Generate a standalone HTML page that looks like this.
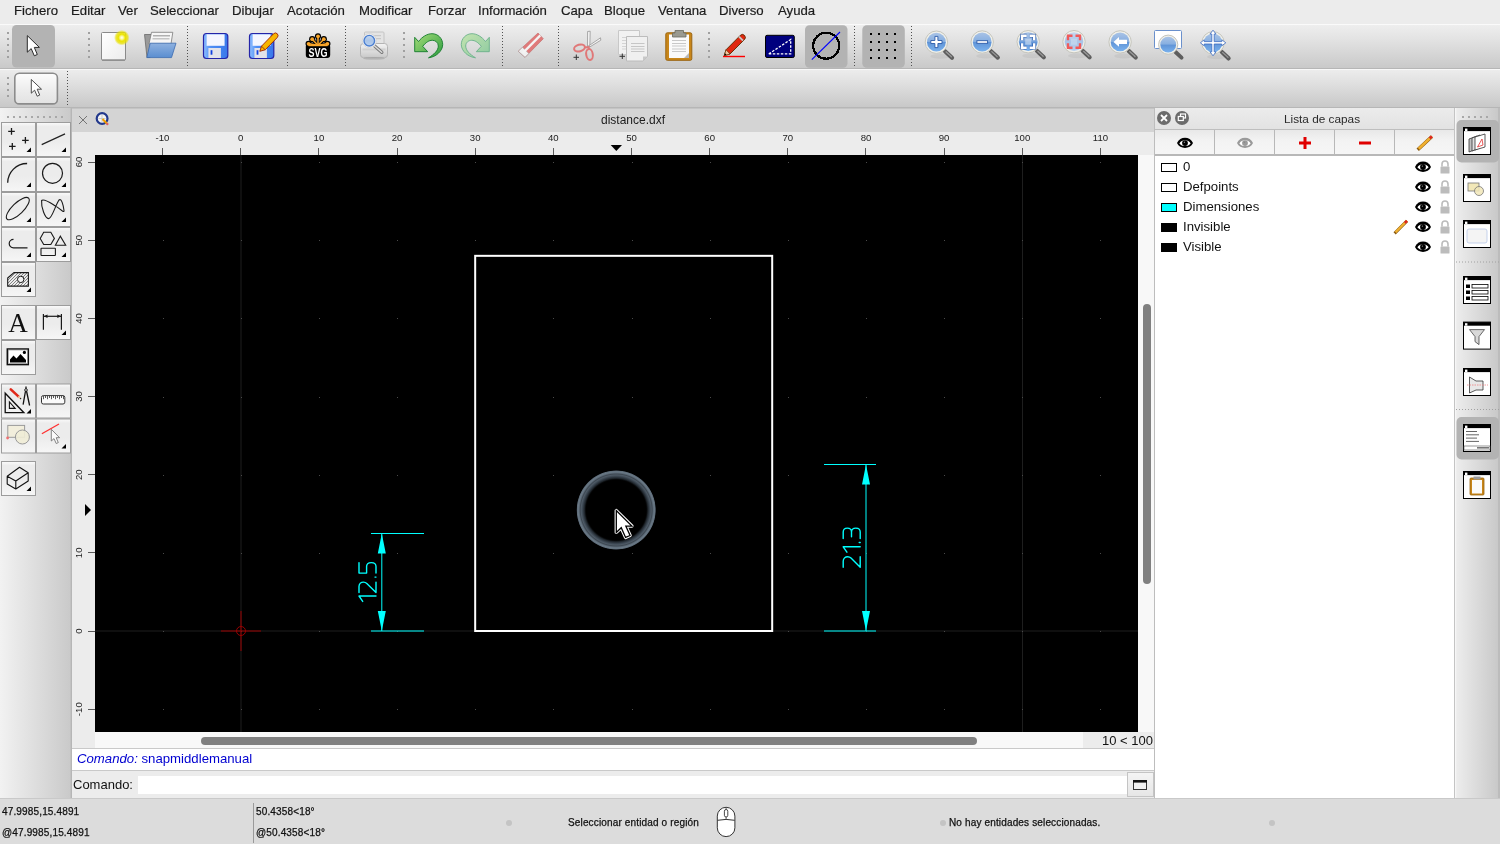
<!DOCTYPE html>
<html><head><meta charset="utf-8">
<style>
*{box-sizing:border-box}
html,body{margin:0;padding:0;width:1500px;height:844px;overflow:hidden;background:#ececec;font-family:"Liberation Sans",sans-serif;position:relative}
.a{position:absolute;will-change:transform}
svg{overflow:visible}
#menubar{left:0;top:0;width:1500px;height:24px;background:#ececec}
#menubar span{will-change:transform;-webkit-text-stroke:0.2px #1c1c1c;position:absolute;top:3px;font-size:13.2px;color:#1c1c1c}
#tb1{left:0;top:24px;width:1500px;height:45px;background:linear-gradient(#eeeeee,#e2e2e2 35%,#c9c9c9);border-top:1px solid #fafafa;border-bottom:1px solid #b6b6b6}
#tb2{left:0;top:69px;width:1500px;height:39px;background:linear-gradient(#ececec,#e0e0e0 35%,#c8c8c8);border-top:1px solid #f8f8f8;border-bottom:1px solid #b6b6b6}
#ldock{left:0;top:108px;width:72px;height:690px;background:linear-gradient(90deg,#f2f2f2,#cacaca 97%,#b0b0b0)}
#doc{left:72px;top:108px;width:1083px;height:690px;background:#ececec}
#doctitle{left:72px;top:108px;width:1082px;height:24px;background:#d4d4d4;border-top:1px solid #c4c4c4}
#ruler{left:72px;top:132px;width:1082px;height:23px;background:#ececec}
#canvas{left:95px;top:155px;width:1043px;height:577px;background:#000}
#vscroll{left:1138px;top:155px;width:16px;height:577px;background:#f8f8f8}
#vthumb{left:1143px;top:303.5px;width:8px;height:279.5px;background:#808080;border-radius:4px}
#hscroll{left:95px;top:732px;width:988px;height:16px;background:#f8f8f8}
#hthumb{left:201px;top:737px;width:776px;height:8px;background:#808080;border-radius:4px}
#zoomlbl{left:1083px;top:732px;width:71px;height:16px;background:#ececec;font-size:13px;color:#111;text-align:right;padding-right:1px;line-height:18px}
#hist{left:72px;top:748px;width:1082px;height:23px;border-top-width:2px;background:#fff;border-top:1px solid #c9c9c9;border-bottom:1px solid #c9c9c9}
#cmdrow{left:72px;top:771px;width:1082px;height:27px;background:#ececec}
#cmdin{left:138px;top:776px;width:989px;height:18px;background:#fff}
#cmdbtn{left:1127px;top:772px;width:27px;height:25px;background:linear-gradient(#f4f4f4,#e6e6e6);border:1px solid #c4c4c4}
#docborder{left:1154px;top:108px;width:2px;height:690px;background:#bdbdbd}
#rdock{left:1155px;top:108px;width:300px;height:690px;background:#fff}
#tdock{left:1455px;top:108px;width:45px;height:690px;background:linear-gradient(90deg,#fafafa,#ececec 4%,#c9c9c9 95%,#bcbcbc 95.5%,#bcbcbc)}
#status{left:0;top:798px;width:1500px;height:46px;background:#dcdcdc;border-top:1px solid #c9c9c9}
.st{position:absolute;font-size:10px;letter-spacing:0.15px;color:#111;white-space:nowrap;-webkit-text-stroke:0.25px #111}
</style></head><body>
<div id="menubar" class="a">
<span style="left:14px">Fichero</span>
<span style="left:71px">Editar</span>
<span style="left:118px">Ver</span>
<span style="left:150px">Seleccionar</span>
<span style="left:232px">Dibujar</span>
<span style="left:287px">Acotación</span>
<span style="left:359px">Modificar</span>
<span style="left:428px">Forzar</span>
<span style="left:478px">Información</span>
<span style="left:561px">Capa</span>
<span style="left:604px">Bloque</span>
<span style="left:658px">Ventana</span>
<span style="left:719px">Diverso</span>
<span style="left:778px">Ayuda</span>
</div>
<div id="tb1" class="a"></div>
<div id="tb2" class="a"></div>
<svg class="a" style="left:0;top:0" width="1500" height="70" viewBox="0 0 1500 70"><defs>
<linearGradient id="gBlueLens" x1="0" y1="0" x2="0" y2="1"><stop offset="0" stop-color="#a9c3e6"/><stop offset="0.48" stop-color="#86aee0"/><stop offset="0.5" stop-color="#5f93d6"/><stop offset="1" stop-color="#7ab2ee"/></linearGradient>
<linearGradient id="gBlueLensL" x1="0" y1="0" x2="0" y2="1"><stop offset="0" stop-color="#c6d8ef"/><stop offset="0.5" stop-color="#a9c4e8"/><stop offset="1" stop-color="#b6d0f0"/></linearGradient>
<linearGradient id="gFloppy" x1="0" y1="0" x2="1" y2="0"><stop offset="0" stop-color="#8fc0ff"/><stop offset="0.3" stop-color="#4e8ef5"/><stop offset="1" stop-color="#3a78ea"/></linearGradient>
<linearGradient id="gFolder" x1="0" y1="0" x2="0" y2="1"><stop offset="0" stop-color="#8fb2e0"/><stop offset="1" stop-color="#5a8ed0"/></linearGradient>
<linearGradient id="gUndo" x1="0" y1="0" x2="1" y2="1"><stop offset="0" stop-color="#a6dc7a"/><stop offset="1" stop-color="#2a9c3e"/></linearGradient>
<linearGradient id="gRedo" x1="1" y1="0" x2="0" y2="1"><stop offset="0" stop-color="#c4e4b0"/><stop offset="1" stop-color="#8ccaa0"/></linearGradient>
<radialGradient id="gGlow"><stop offset="0" stop-color="#ffffff"/><stop offset="0.2" stop-color="#fbf8a0"/><stop offset="0.45" stop-color="#ece400"/><stop offset="0.75" stop-color="#e8e000" stop-opacity="0.75"/><stop offset="1" stop-color="#e8e000" stop-opacity="0"/></radialGradient>
<linearGradient id="gPage" x1="0" y1="0" x2="1" y2="1"><stop offset="0" stop-color="#ffffff"/><stop offset="1" stop-color="#ececec"/></linearGradient>
<linearGradient id="gPrinter" x1="0" y1="0" x2="0" y2="1"><stop offset="0" stop-color="#f4f4f4"/><stop offset="1" stop-color="#c8c8c8"/></linearGradient>
</defs><rect x="7" y="32" width="2" height="2" fill="#a0a0a0"/><rect x="7" y="38" width="2" height="2" fill="#a0a0a0"/><rect x="7" y="44" width="2" height="2" fill="#a0a0a0"/><rect x="7" y="50" width="2" height="2" fill="#a0a0a0"/><rect x="7" y="56" width="2" height="2" fill="#a0a0a0"/><rect x="12" y="25" width="43" height="42.5" rx="4.5" fill="#b3b3b3"/><path d="M27.3,35.6 L27.3,52.2 L31.2,48.6 L34.3,55.8 L37.3,54.5 L34.3,47.4 L39.4,47.4 Z" fill="#fff" stroke="#2a2a2a" stroke-width="1" stroke-linejoin="round"/><rect x="88" y="32" width="2" height="2" fill="#a0a0a0"/><rect x="88" y="38" width="2" height="2" fill="#a0a0a0"/><rect x="88" y="44" width="2" height="2" fill="#a0a0a0"/><rect x="88" y="50" width="2" height="2" fill="#a0a0a0"/><rect x="88" y="56" width="2" height="2" fill="#a0a0a0"/><rect x="101.5" y="32.5" width="24" height="27.5" rx="1" fill="url(#gPage)" stroke="#8a8a8a" stroke-width="1"/><line x1="102" y1="60.2" x2="125" y2="60.2" stroke="#8a8a8a" stroke-width="1.2"/><circle cx="121.8" cy="37.7" r="7.8" fill="url(#gGlow)"/><path d="M144.5,34.5 L152,34.5 L150,57.5 L147,57.5 Z" fill="#9a9a9a" stroke="#6a6a6a" stroke-width="0.8"/><path d="M151.5,32.3 L172.8,32.3 L171,44 L149,44 Z" fill="#f6f6f6" stroke="#7a7a7a" stroke-width="0.8"/><rect x="153" y="35" width="17" height="1.5" fill="#b0b0b0"/><rect x="152.5" y="38" width="17" height="1.5" fill="#c4c4c4"/><path d="M150.2,43.2 L176,43.2 L171.5,57.6 L146.8,57.6 Z" fill="url(#gFolder)" stroke="#3a6ab0" stroke-width="0.8"/><line x1="187.5" y1="26" x2="187.5" y2="67" stroke="#505050" stroke-width="1" stroke-dasharray="1 2"/><rect x="203.5" y="33.5" width="24.3" height="25" rx="3" fill="url(#gFloppy)" stroke="#2424a8" stroke-width="1.2"/><rect x="206.6" y="34.3" width="18" height="11.5" fill="#f4f6ff"/><rect x="208.4" y="48" width="12.5" height="10" fill="#e2e2ea"/><rect x="210.6" y="50.2" width="1.8" height="4.5" fill="#1040e0"/><rect x="249.5" y="33.5" width="24.3" height="25" rx="3" fill="url(#gFloppy)" stroke="#2424a8" stroke-width="1.2"/><rect x="252.6" y="34.3" width="18" height="11.5" fill="#f4f6ff"/><rect x="254.4" y="48" width="12.5" height="10" fill="#e2e2ea"/><rect x="256.6" y="50.2" width="1.8" height="4.5" fill="#1040e0"/><path d="M259.8,51.3 L261.5,46.2 L273.5,33.8 Q275.5,32 277.3,33.8 Q279,35.8 277.2,37.6 L265.2,49.8 Z" fill="#f7b500" stroke="#a02000" stroke-width="0.9"/><path d="M261.5,46.2 L265.2,49.8" stroke="#a02000" stroke-width="0.8"/><line x1="287.5" y1="26" x2="287.5" y2="67" stroke="#505050" stroke-width="1" stroke-dasharray="1 2"/><g stroke="#000" stroke-width="3.6" stroke-linecap="round"><line x1="318" y1="46" x2="318" y2="36.3"/><line x1="318" y1="46" x2="312.2" y2="39.2"/><line x1="318" y1="46" x2="323.8" y2="39.2"/><line x1="318" y1="46" x2="308.6" y2="43.8"/><line x1="318" y1="46" x2="327.4" y2="43.8"/></g><g fill="#000"><circle cx="318" cy="36.3" r="3.1"/><circle cx="312.2" cy="39.2" r="3.1"/><circle cx="323.8" cy="39.2" r="3.1"/><circle cx="308.6" cy="43.8" r="3.1"/><circle cx="327.4" cy="43.8" r="3.1"/></g><rect x="305.8" y="43.6" width="24.4" height="14.4" rx="3.2" fill="#000"/><g stroke="#f9a62a" stroke-width="1.5" stroke-linecap="round"><line x1="318" y1="45.3" x2="318" y2="36.3"/><line x1="318" y1="45.3" x2="312.2" y2="39.2"/><line x1="318" y1="45.3" x2="323.8" y2="39.2"/><line x1="318" y1="45.3" x2="308.6" y2="43.8"/><line x1="318" y1="45.3" x2="327.4" y2="43.8"/></g><g fill="#f9a62a"><circle cx="318" cy="36.3" r="1.9"/><circle cx="312.2" cy="39.2" r="1.9"/><circle cx="323.8" cy="39.2" r="1.9"/><circle cx="308.6" cy="43.8" r="1.9"/><circle cx="327.4" cy="43.8" r="1.9"/></g><rect x="308.5" y="44.6" width="19" height="1.6" fill="#f9a62a"/><text x="318" y="56.6" text-anchor="middle" font-family="Liberation Sans" font-weight="bold" font-size="13.5" fill="#fff" textLength="19" lengthAdjust="spacingAndGlyphs">SVG</text><line x1="345.5" y1="26" x2="345.5" y2="67" stroke="#505050" stroke-width="1" stroke-dasharray="1 2"/><rect x="364.5" y="32" width="19.5" height="14" rx="1" fill="#e4e4e4" stroke="#c4c4c4" stroke-width="1"/><rect x="367" y="35" width="14" height="1.2" fill="#c8c8c8"/><rect x="367" y="38" width="14" height="1.2" fill="#c8c8c8"/><rect x="360.5" y="43.5" width="27" height="14.2" rx="3" fill="url(#gPrinter)" stroke="#b4b4b4" stroke-width="1"/><rect x="362.5" y="48.5" width="23" height="2" fill="#d0d0d0"/><ellipse cx="374" cy="58.5" rx="11" ry="1.3" fill="#000" opacity="0.12"/><line x1="373.5" y1="45" x2="381.8" y2="52.3" stroke="#7a7a7a" stroke-width="3.4" stroke-linecap="round"/><line x1="373.5" y1="45" x2="381.8" y2="52.3" stroke="#dcdcdc" stroke-width="1.4" stroke-linecap="round"/><circle cx="369.3" cy="40.7" r="7" fill="#f8f8f8" stroke="#d0d0d0" stroke-width="0.8"/><circle cx="369.3" cy="40.7" r="5.3" fill="url(#gBlueLensL)" stroke="#4a7ed0" stroke-width="1.4"/><rect x="403" y="32" width="2" height="2" fill="#a0a0a0"/><rect x="403" y="38" width="2" height="2" fill="#a0a0a0"/><rect x="403" y="44" width="2" height="2" fill="#a0a0a0"/><rect x="403" y="50" width="2" height="2" fill="#a0a0a0"/><rect x="403" y="56" width="2" height="2" fill="#a0a0a0"/><path d="M414.7,37.3 L418.5,41.5 C422,37 427,33.7 432,33.7 C438,33.7 442.7,38.5 442.7,44.5 C442.7,51 436,57 428.5,57.8 C434,54.5 438.3,50.5 438.3,46 C438.3,42.5 435.5,40.3 432.3,40.3 C429,40.3 426,42.3 422.7,46.3 L427.7,51.7 L414.7,51.7 Z" fill="url(#gUndo)" stroke="#137a2a" stroke-width="0.9" stroke-linejoin="round"/><path transform="translate(904,0) scale(-1,1)" d="M414.7,37.3 L418.5,41.5 C422,37 427,33.7 432,33.7 C438,33.7 442.7,38.5 442.7,44.5 C442.7,51 436,57 428.5,57.8 C434,54.5 438.3,50.5 438.3,46 C438.3,42.5 435.5,40.3 432.3,40.3 C429,40.3 426,42.3 422.7,46.3 L427.7,51.7 L414.7,51.7 Z" fill="url(#gRedo)" stroke="#6ab08a" stroke-width="0.9" stroke-linejoin="round"/><line x1="502.5" y1="26" x2="502.5" y2="67" stroke="#505050" stroke-width="1" stroke-dasharray="1 2"/><ellipse cx="530" cy="57" rx="10" ry="1.6" fill="#d4d4d4"/><path d="M538,33 L543.3,38.7 L525,57.3 L518.3,51.3 Z" fill="#e07a7a" stroke="#c06868" stroke-width="0.6"/><path d="M522.5,47.2 L528.8,53.6 L525,57.3 L518.3,51.3 Z" fill="#f0f0f0" stroke="#a0a0a0" stroke-width="0.6"/><path d="M539.5,34.6 L541.1,36.3 L524,53.5 L522.4,51.8 Z" fill="#f4f4f4"/><line x1="558.5" y1="26" x2="558.5" y2="67" stroke="#505050" stroke-width="1" stroke-dasharray="1 2"/><path d="M587.5,46.5 L587.6,31.5 L590.2,31.2 L589.8,46 Z" fill="#f4f4f4" stroke="#8a8a8a" stroke-width="0.7"/><path d="M588.5,46 L600.5,37.8 L600.8,40.2 L590,46.8 Z" fill="#f4f4f4" stroke="#8a8a8a" stroke-width="0.7"/><ellipse cx="579.5" cy="48" rx="5.5" ry="3.3" transform="rotate(-15 579.5 48)" fill="none" stroke="#e07878" stroke-width="2"/><ellipse cx="589.5" cy="54.5" rx="3.3" ry="5.5" transform="rotate(-8 589.5 54.5)" fill="none" stroke="#e07878" stroke-width="2"/><path d="M584.5,47.5 L588.5,47 L589.5,49.5" fill="none" stroke="#e07878" stroke-width="2"/><path d="M573.5,57.3 L579,57.3 M576.3,54.5 L576.3,60" stroke="#333" stroke-width="1"/><path d="M618.5,30.5 L639.5,30.5 L639.5,54.5 L618.5,54.5 Z" fill="#f2f2f2" stroke="#c8c8c8" stroke-width="1"/><rect x="622" y="37" width="10" height="1" fill="#d4d4d4"/><rect x="622" y="40" width="10" height="1" fill="#d4d4d4"/><rect x="622" y="43" width="10" height="1" fill="#d4d4d4"/><rect x="622" y="46" width="10" height="1" fill="#d4d4d4"/><rect x="622" y="48.5" width="10" height="1" fill="#d4d4d4"/><path d="M626.5,36.5 L647.5,36.5 L647.5,56.5 L643,61 L626.5,61 Z" fill="#f0f0f0" stroke="#bcbcbc" stroke-width="1"/><path d="M643,61 L643,56.5 L647.5,56.5 Z" fill="#c8c8c8"/><rect x="631" y="43" width="13.5" height="1" fill="#c6c6c6"/><rect x="631" y="46" width="13.5" height="1" fill="#c6c6c6"/><rect x="631" y="48.5" width="13.5" height="1" fill="#c6c6c6"/><rect x="631" y="51" width="13.5" height="1" fill="#c6c6c6"/><path d="M619.5,56.3 L625,56.3 M622.3,53.5 L622.3,59" stroke="#333" stroke-width="1"/><rect x="665.8" y="32.8" width="26" height="27.5" rx="1.5" fill="#c8861a" stroke="#9a6410" stroke-width="1"/><rect x="669" y="34.5" width="20" height="23.5" fill="#fafafa"/><path d="M684,58 L689,58 L689,53 Z" fill="#b8b8b8"/><rect x="672" y="40" width="14" height="1" fill="#c8c8c8"/><rect x="672" y="43" width="14" height="1" fill="#c8c8c8"/><rect x="672" y="45.5" width="14" height="1" fill="#c8c8c8"/><rect x="672" y="48.5" width="14" height="1" fill="#c8c8c8"/><rect x="672" y="51" width="14" height="1" fill="#c8c8c8"/><path d="M672.5,37 L672.5,33 L675,33 L675,30.5 L683.5,30.5 L683.5,33 L686,33 L686,37 Z" fill="#9a9a90" stroke="#6a6a60" stroke-width="0.8"/><rect x="708" y="32" width="2" height="2" fill="#a0a0a0"/><rect x="708" y="38" width="2" height="2" fill="#a0a0a0"/><rect x="708" y="44" width="2" height="2" fill="#a0a0a0"/><rect x="708" y="50" width="2" height="2" fill="#a0a0a0"/><rect x="708" y="56" width="2" height="2" fill="#a0a0a0"/><line x1="723" y1="56.5" x2="745" y2="56.5" stroke="#ff0000" stroke-width="1.4"/><path d="M724.3,55.5 L726,49.8 L740.5,35.2 Q742.6,33.4 744.6,35.5 Q746.3,37.5 744.5,39.5 L730,54 Z" fill="#e02810" stroke="#5a2a00" stroke-width="0.9"/><path d="M726,49.8 L730,54 L724.3,55.5 Z" fill="#f2c8a0" stroke="#5a2a00" stroke-width="0.6"/><path d="M724.3,55.5 L725,53.3 L726.5,54.8 Z" fill="#000"/><path d="M739,36.7 L743,40.7" stroke="#c8c8c8" stroke-width="1.8"/><rect x="765.5" y="35.3" width="28.8" height="22.2" rx="1.5" fill="#00007e" stroke="#000" stroke-width="1"/><path d="M768.8,53.9 L790.7,39.5 L790.7,53.9 Z" fill="none" stroke="#fff" stroke-width="1.3" stroke-dasharray="2.5 1.5"/><rect x="805" y="25.3" width="42.5" height="42.5" rx="4.5" fill="#b3b3b3"/><circle cx="826.2" cy="45.7" r="13" fill="none" stroke="#000" stroke-width="2.3" shape-rendering="crispEdges"/><line x1="811.8" y1="59.6" x2="840" y2="32" stroke="#0000ff" stroke-width="1.1"/><line x1="854.5" y1="26" x2="854.5" y2="67" stroke="#505050" stroke-width="1" stroke-dasharray="1 2"/><rect x="862.3" y="25.3" width="42.5" height="42.5" rx="4.5" fill="#b3b3b3"/><rect x="870" y="33" width="2" height="2" fill="#000"/><rect x="870" y="41" width="2" height="2" fill="#000"/><rect x="870" y="49" width="2" height="2" fill="#000"/><rect x="870" y="57" width="2" height="2" fill="#000"/><rect x="878" y="33" width="2" height="2" fill="#000"/><rect x="878" y="41" width="2" height="2" fill="#000"/><rect x="878" y="49" width="2" height="2" fill="#000"/><rect x="878" y="57" width="2" height="2" fill="#000"/><rect x="886" y="33" width="2" height="2" fill="#000"/><rect x="886" y="41" width="2" height="2" fill="#000"/><rect x="886" y="49" width="2" height="2" fill="#000"/><rect x="886" y="57" width="2" height="2" fill="#000"/><rect x="894" y="33" width="2" height="2" fill="#000"/><rect x="894" y="41" width="2" height="2" fill="#000"/><rect x="894" y="49" width="2" height="2" fill="#000"/><rect x="894" y="57" width="2" height="2" fill="#000"/><line x1="911.5" y1="26" x2="911.5" y2="67" stroke="#505050" stroke-width="1" stroke-dasharray="1 2"/><line x1="945.0" y1="51.2" x2="952.0" y2="57.800000000000004" stroke="#5e5e5e" stroke-width="4.2" stroke-linecap="round"/><line x1="946.0" y1="51.800000000000004" x2="951.4" y2="56.800000000000004" stroke="#9a9a9a" stroke-width="1.2" stroke-linecap="round"/><ellipse cx="940.4" cy="56.2" rx="10" ry="2.5" fill="#000" opacity="0.05"/><circle cx="936.4" cy="42.2" r="11.2" fill="#f0f0ea" stroke="#c4c4bc" stroke-width="1"/><circle cx="936.4" cy="42.2" r="9.4" fill="url(#gBlueLens)"/><path d="M934.9,36.4 L937.9,36.4 L937.9,40.5 L942.0,40.5 L942.0,43.5 L937.9,43.5 L937.9,47.6 L934.9,47.6 L934.9,43.5 L930.8,43.5 L930.8,40.5 L934.9,40.5 Z" fill="#fff" stroke="#2a5aa8" stroke-width="0.9"/><line x1="990.8000000000001" y1="51" x2="997.8000000000001" y2="57.6" stroke="#5e5e5e" stroke-width="4.2" stroke-linecap="round"/><line x1="991.8000000000001" y1="51.6" x2="997.2" y2="56.6" stroke="#9a9a9a" stroke-width="1.2" stroke-linecap="round"/><ellipse cx="986.2" cy="56" rx="10" ry="2.5" fill="#000" opacity="0.05"/><circle cx="982.2" cy="42" r="11.2" fill="#f0f0ea" stroke="#c4c4bc" stroke-width="1"/><circle cx="982.2" cy="42" r="9.4" fill="url(#gBlueLens)"/><rect x="976.9" y="40.7" width="10.7" height="2.6" fill="#fff" stroke="#2a5aa8" stroke-width="0.9"/><line x1="1036.8" y1="50.7" x2="1043.8" y2="57.300000000000004" stroke="#5e5e5e" stroke-width="4.2" stroke-linecap="round"/><line x1="1037.8" y1="51.300000000000004" x2="1043.2" y2="56.300000000000004" stroke="#9a9a9a" stroke-width="1.2" stroke-linecap="round"/><ellipse cx="1032.2" cy="55.7" rx="10" ry="2.5" fill="#000" opacity="0.05"/><circle cx="1028.2" cy="41.7" r="11.2" fill="#f0f0ea" stroke="#c4c4bc" stroke-width="1"/><circle cx="1028.2" cy="41.7" r="9.4" fill="url(#gBlueLens)"/><rect x="1025.2" y="38.7" width="6" height="6" fill="#c8daf0" opacity="0.7"/><path d="M1022.2,40.2 L1022.2,35.7 L1026.7,35.7 M1029.7,35.7 L1034.2,35.7 L1034.2,40.2 M1034.2,43.2 L1034.2,47.7 L1029.7,47.7 M1026.7,47.7 L1022.2,47.7 L1022.2,43.2" fill="none" stroke="#2a5aa8" stroke-width="3.8" opacity="0.9"/><path d="M1022.2,40.2 L1022.2,35.7 L1026.7,35.7 M1029.7,35.7 L1034.2,35.7 L1034.2,40.2 M1034.2,43.2 L1034.2,47.7 L1029.7,47.7 M1026.7,47.7 L1022.2,47.7 L1022.2,43.2" fill="none" stroke="#fff" stroke-width="2.4"/><line x1="1082.6" y1="50.7" x2="1089.6" y2="57.300000000000004" stroke="#5e5e5e" stroke-width="4.2" stroke-linecap="round"/><line x1="1083.6" y1="51.300000000000004" x2="1089" y2="56.300000000000004" stroke="#9a9a9a" stroke-width="1.2" stroke-linecap="round"/><ellipse cx="1078" cy="55.7" rx="10" ry="2.5" fill="#000" opacity="0.05"/><circle cx="1074" cy="41.7" r="11.2" fill="#f0f0ea" stroke="#c4c4bc" stroke-width="1"/><circle cx="1074" cy="41.7" r="9.4" fill="url(#gBlueLensL)"/><rect x="1071" y="38.7" width="6" height="6" fill="#c8daf0" opacity="0.7"/><path d="M1068,40.2 L1068,35.7 L1072.5,35.7 M1075.5,35.7 L1080,35.7 L1080,40.2 M1080,43.2 L1080,47.7 L1075.5,47.7 M1072.5,47.7 L1068,47.7 L1068,43.2" fill="none" stroke="#2a5aa8" stroke-width="3.8" opacity="0"/><path d="M1068,40.2 L1068,35.7 L1072.5,35.7 M1075.5,35.7 L1080,35.7 L1080,40.2 M1080,43.2 L1080,47.7 L1075.5,47.7 M1072.5,47.7 L1068,47.7 L1068,43.2" fill="none" stroke="#f05a5a" stroke-width="2.4"/><line x1="1128.6999999999998" y1="50.9" x2="1135.6999999999998" y2="57.5" stroke="#5e5e5e" stroke-width="4.2" stroke-linecap="round"/><line x1="1129.6999999999998" y1="51.5" x2="1135.1" y2="56.5" stroke="#9a9a9a" stroke-width="1.2" stroke-linecap="round"/><ellipse cx="1124.1" cy="55.9" rx="10" ry="2.5" fill="#000" opacity="0.05"/><circle cx="1120.1" cy="41.9" r="11.2" fill="#f0f0ea" stroke="#c4c4bc" stroke-width="1"/><circle cx="1120.1" cy="41.9" r="9.4" fill="url(#gBlueLens)"/><path d="M1113.5,41.9 L1119,37 L1119,39.7 L1127,39.7 L1127,44.1 L1119,44.1 L1119,46.8 Z" fill="#fff"/><rect x="1154.5" y="30.5" width="27" height="18" rx="1" fill="#fff" stroke="#6a90cc" stroke-width="1"/><line x1="1175.5" y1="52" x2="1181.5" y2="57.6" stroke="#5e5e5e" stroke-width="4" stroke-linecap="round"/><circle cx="1168.2" cy="44.7" r="9.6" fill="#f0f0ea" stroke="#c4c4bc" stroke-width="1"/><circle cx="1168.2" cy="44.7" r="7.9" fill="url(#gBlueLens)"/><line x1="1221.6" y1="51.8" x2="1228.6" y2="58.4" stroke="#5e5e5e" stroke-width="4.2" stroke-linecap="round"/><line x1="1222.6" y1="52.4" x2="1228" y2="57.4" stroke="#9a9a9a" stroke-width="1.2" stroke-linecap="round"/><ellipse cx="1217" cy="56.8" rx="10" ry="2.5" fill="#000" opacity="0.05"/><circle cx="1213" cy="42.8" r="11.2" fill="#f0f0ea" stroke="#c4c4bc" stroke-width="1"/><circle cx="1213" cy="42.8" r="9.4" fill="url(#gBlueLens)"/><g fill="#fff" stroke="#3a6ac0" stroke-width="0.8"><path d="M1213,30.2 L1216,34 L1214.2,34 L1214.2,41.6 L1221.8,41.6 L1221.8,39.8 L1225.8,42.8 L1221.8,45.8 L1221.8,44 L1214.2,44 L1214.2,51.8 L1216,51.8 L1213,55.8 L1210,51.8 L1211.8,51.8 L1211.8,44 L1204.2,44 L1204.2,45.8 L1200.4,42.8 L1204.2,39.8 L1204.2,41.6 L1211.8,41.6 L1211.8,34 L1210,34 Z"/></g></svg>
<svg class="a" style="left:0;top:0" width="1500" height="110" viewBox="0 0 1500 110"><rect x="7" y="77" width="2" height="2" fill="#a0a0a0"/><rect x="7" y="83" width="2" height="2" fill="#a0a0a0"/><rect x="7" y="89" width="2" height="2" fill="#a0a0a0"/><rect x="7" y="95" width="2" height="2" fill="#a0a0a0"/><defs><linearGradient id="gBtn2" x1="0" y1="0" x2="0" y2="1"><stop offset="0" stop-color="#fdfdfd"/><stop offset="0.5" stop-color="#eeeeee"/><stop offset="1" stop-color="#e2e2e2"/></linearGradient></defs><rect x="14.8" y="73.3" width="42.6" height="30.6" rx="4.5" fill="url(#gBtn2)" stroke="#8c8c8c" stroke-width="1.6"/><path d="M31.3,79.5 L31.3,93.2 L34.6,90.2 L37.2,96.2 L39.7,95.1 L37.2,89.2 L41.5,89.2 Z" fill="#fff" stroke="#3a3a3a" stroke-width="0.9" stroke-linejoin="round"/><line x1="67.5" y1="71" x2="67.5" y2="105" stroke="#505050" stroke-width="1" stroke-dasharray="1 2"/></svg>
<div id="ldock" class="a"></div>
<svg class="a" style="left:0;top:0" width="72" height="844" viewBox="0 0 72 844"><defs><linearGradient id="gTool" x1="0" y1="0" x2="0" y2="1"><stop offset="0" stop-color="#fbfbfb"/><stop offset="0.12" stop-color="#ececec"/><stop offset="0.55" stop-color="#ececec"/><stop offset="1" stop-color="#f6f6f6"/></linearGradient></defs><rect x="7" y="116" width="2" height="2" fill="#a8a8a8"/><rect x="13" y="116" width="2" height="2" fill="#a8a8a8"/><rect x="19" y="116" width="2" height="2" fill="#a8a8a8"/><rect x="25" y="116" width="2" height="2" fill="#a8a8a8"/><rect x="31" y="116" width="2" height="2" fill="#a8a8a8"/><rect x="37" y="116" width="2" height="2" fill="#a8a8a8"/><rect x="43" y="116" width="2" height="2" fill="#a8a8a8"/><rect x="49" y="116" width="2" height="2" fill="#a8a8a8"/><rect x="55" y="116" width="2" height="2" fill="#a8a8a8"/><rect x="61" y="116" width="2" height="2" fill="#a8a8a8"/><rect x="1.5" y="122.5" width="34" height="34" fill="url(#gTool)" stroke="#9c9c9c" stroke-width="1"/><path d="M26.5,152 L31,152 L31,147.5 Z" fill="#000"/><rect x="36.5" y="122.5" width="34" height="34" fill="url(#gTool)" stroke="#9c9c9c" stroke-width="1"/><path d="M61.5,152 L66,152 L66,147.5 Z" fill="#000"/><rect x="1.5" y="157.5" width="34" height="34" fill="url(#gTool)" stroke="#9c9c9c" stroke-width="1"/><path d="M26.5,187 L31,187 L31,182.5 Z" fill="#000"/><rect x="36.5" y="157.5" width="34" height="34" fill="url(#gTool)" stroke="#9c9c9c" stroke-width="1"/><path d="M61.5,187 L66,187 L66,182.5 Z" fill="#000"/><rect x="1.5" y="192.5" width="34" height="34" fill="url(#gTool)" stroke="#9c9c9c" stroke-width="1"/><path d="M26.5,222 L31,222 L31,217.5 Z" fill="#000"/><rect x="36.5" y="192.5" width="34" height="34" fill="url(#gTool)" stroke="#9c9c9c" stroke-width="1"/><path d="M61.5,222 L66,222 L66,217.5 Z" fill="#000"/><rect x="1.5" y="227.5" width="34" height="34" fill="url(#gTool)" stroke="#9c9c9c" stroke-width="1"/><path d="M26.5,257 L31,257 L31,252.5 Z" fill="#000"/><rect x="36.5" y="227.5" width="34" height="34" fill="url(#gTool)" stroke="#9c9c9c" stroke-width="1"/><path d="M61.5,257 L66,257 L66,252.5 Z" fill="#000"/><rect x="1.5" y="262.5" width="34" height="34" fill="url(#gTool)" stroke="#9c9c9c" stroke-width="1"/><path d="M26.5,292 L31,292 L31,287.5 Z" fill="#000"/><g stroke="#1a1a1a" fill="none" stroke-width="1.3"><path d="M8.2,131.4 L14.8,131.4 M11.5,128.1 L11.5,134.70000000000002"/><path d="M22.099999999999998,140.3 L28.7,140.3 M25.4,137.0 L25.4,143.60000000000002"/><path d="M9.0,146.4 L15.600000000000001,146.4 M12.3,143.1 L12.3,149.70000000000002"/></g><line x1="41.7" y1="144.6" x2="65" y2="133.9" stroke="#222" stroke-width="1.2"/><path d="M7.7,182.7 A19.4,19.4 0 0 1 27.1,163.5" stroke="#1a1a1a" fill="none" stroke-width="1.3"/><circle cx="52.5" cy="173.3" r="10" stroke="#1a1a1a" fill="none" stroke-width="1.2"/><ellipse cx="17.8" cy="208.6" rx="15" ry="5.6" transform="rotate(-44 17.8 208.6)" stroke="#1a1a1a" fill="none" stroke-width="1.1"/><path d="M41.6,200.5 C41,207 45,218.6 48.6,218.6 C52,218.6 55,206 59,200 C61.5,197.5 63.5,206 64,210.5 C64.5,214 58,207 55.5,206 C52,204 44,198 41.6,200.5 Z" stroke="#1a1a1a" fill="none" stroke-width="1.1"/><path d="M13.5,239.3 A4.3,4.3 0 0 0 13.5,247.9 L27.5,247.9" stroke="#1a1a1a" fill="none" stroke-width="1.2"/><path d="M40.2,238.4 L43.7,232.3 L50.8,232.3 L54.4,238.4 L50.8,244.5 L43.7,244.5 Z" stroke="#1a1a1a" fill="none" stroke-width="1.1"/><path d="M60.3,236.2 L55.4,245.3 L65.7,245.3 Z" stroke="#1a1a1a" fill="none" stroke-width="1.1"/><rect x="41" y="248.3" width="14.4" height="7.2" rx="0.5" stroke="#1a1a1a" fill="none" stroke-width="1.1"/><clipPath id="cpH"><path d="M7.7,278 L14,272.6 L28.4,272.6 L28.4,286.1 L7.7,286.1 Z"/></clipPath><g clip-path="url(#cpH)" stroke="#555" stroke-width="0.7"><line x1="-2" y1="287" x2="13" y2="272"/><line x1="1" y1="287" x2="16" y2="272"/><line x1="4" y1="287" x2="19" y2="272"/><line x1="7" y1="287" x2="22" y2="272"/><line x1="10" y1="287" x2="25" y2="272"/><line x1="13" y1="287" x2="28" y2="272"/><line x1="16" y1="287" x2="31" y2="272"/><line x1="19" y1="287" x2="34" y2="272"/><line x1="22" y1="287" x2="37" y2="272"/><line x1="25" y1="287" x2="40" y2="272"/><line x1="28" y1="287" x2="43" y2="272"/></g><circle cx="20.7" cy="279.4" r="3.2" fill="#f0f0f0" stroke="#1a1a1a" stroke-width="1"/><path d="M7.7,278 L14,272.6 L28.4,272.6 L28.4,286.1 L7.7,286.1 Z" stroke="#1a1a1a" fill="none" stroke-width="1.1"/><rect x="1.5" y="305.5" width="34" height="34" fill="url(#gTool)" stroke="#9c9c9c" stroke-width="1"/><rect x="36.5" y="305.5" width="34" height="34" fill="url(#gTool)" stroke="#9c9c9c" stroke-width="1"/><path d="M61.5,335 L66,335 L66,330.5 Z" fill="#000"/><rect x="1.5" y="340.5" width="34" height="34" fill="url(#gTool)" stroke="#9c9c9c" stroke-width="1"/><text x="17.9" y="331.7" text-anchor="middle" font-family="Liberation Serif" font-size="27" fill="#111">A</text><g stroke="#1a1a1a" stroke-width="1.2" fill="none"><line x1="43.4" y1="314" x2="43.4" y2="329.8"/><line x1="61.4" y1="314" x2="61.4" y2="329.8"/><line x1="44" y1="316.3" x2="61" y2="316.3"/></g><path d="M43.8,316.3 L47.5,314.5 L47.5,318.1 Z M61,316.3 L57.3,314.5 L57.3,318.1 Z" fill="#1a1a1a"/><rect x="7.3" y="349" width="21" height="15.6" fill="#fff" stroke="#111" stroke-width="1.5"/><rect x="8.3" y="350" width="19" height="13.6" fill="none" stroke="#888" stroke-width="0.6"/><path d="M10,362.5 L10,359.5 L13.5,355.5 L16.5,358.5 L20.5,354 L26,360 L26,362.5 Z" fill="#000"/><circle cx="24.4" cy="352.4" r="1.6" fill="#000"/><rect x="1.5" y="384.0" width="34" height="34" fill="url(#gTool)" stroke="#9c9c9c" stroke-width="1"/><path d="M26.5,413.5 L31,413.5 L31,409.0 Z" fill="#000"/><rect x="36.5" y="384.0" width="34" height="34" fill="url(#gTool)" stroke="#9c9c9c" stroke-width="1"/><rect x="1.5" y="419.0" width="34" height="34" fill="url(#gTool)" stroke="#9c9c9c" stroke-width="1"/><rect x="36.5" y="419.0" width="34" height="34" fill="url(#gTool)" stroke="#9c9c9c" stroke-width="1"/><path d="M61.5,448.5 L66,448.5 L66,444.0 Z" fill="#000"/><path d="M5.2,393.2 L5.2,412.7 L23.9,412.7 Z" fill="none" stroke="#111" stroke-width="1.3"/><path d="M9.4,401.9 L9.4,408.4 L15.2,408.4 Z" fill="none" stroke="#111" stroke-width="1.1"/><path d="M10.8,389.4 L18.6,396.6" stroke="#e02818" stroke-width="2.6" stroke-linecap="round"/><path d="M18.4,396.4 L20.6,398.6" stroke="#f0d0a8" stroke-width="2"/><path d="M20.2,398.2 L21,399" stroke="#222" stroke-width="1.2"/><path d="M23.1,404.7 L25.6,390.5 M26.4,390.5 L29.6,405.5 M26,386.5 L26,389" fill="none" stroke="#111" stroke-width="1.3"/><circle cx="26" cy="390" r="1.3" fill="#fff" stroke="#111" stroke-width="0.9"/><rect x="41.5" y="395.6" width="23.3" height="8.4" rx="1.8" fill="#fafafa" stroke="#333" stroke-width="1"/><g stroke="#333" stroke-width="0.8"><line x1="43.5" y1="396" x2="43.5" y2="399.2"/><line x1="45.5" y1="396" x2="45.5" y2="398"/><line x1="47.5" y1="396" x2="47.5" y2="399.2"/><line x1="49.5" y1="396" x2="49.5" y2="398"/><line x1="51.5" y1="396" x2="51.5" y2="399.2"/><line x1="53.5" y1="396" x2="53.5" y2="398"/><line x1="55.5" y1="396" x2="55.5" y2="399.2"/><line x1="57.5" y1="396" x2="57.5" y2="398"/><line x1="59.5" y1="396" x2="59.5" y2="399.2"/><line x1="61.5" y1="396" x2="61.5" y2="398"/><line x1="63.5" y1="396" x2="63.5" y2="399.2"/></g><rect x="7.8" y="425.4" width="16.8" height="11.9" fill="#f2eedc" stroke="#9a9a9a" stroke-width="1"/><circle cx="22.4" cy="437" r="7" fill="#f0ecd6" fill-opacity="0.9" stroke="#9a9a9a" stroke-width="1"/><circle cx="7.6" cy="438" r="1.4" fill="#f07070"/><line x1="41.9" y1="433.7" x2="59" y2="424" stroke="#ff3030" stroke-width="1.3"/><path d="M51.3,429.3 L51.3,441 L54,438.6 L56.2,443.5 L58.3,442.6 L56.2,437.7 L59.6,437.7 Z" fill="#fafafa" stroke="#777" stroke-width="0.9" stroke-linejoin="round"/><rect x="1.5" y="461.5" width="34" height="34" fill="url(#gTool)" stroke="#9c9c9c" stroke-width="1"/><path d="M26.5,491 L31,491 L31,486.5 Z" fill="#000"/><path d="M7.2,476.3 L19.5,467.3 L28.2,472.7 L15.8,481 Z M7.2,476.3 L7.2,484 L15.8,489 L15.8,481 M15.8,489 L28.2,481 L28.2,472.7" fill="none" stroke="#111" stroke-width="1.1" stroke-linejoin="round"/></svg>
<div id="doc" class="a"></div>
<div id="doctitle" class="a"></div>
<div class="a" style="left:601px;top:113px;font-size:12px;color:#1c1c1c">distance.dxf</div>
<svg class="a" style="left:70px;top:105px" width="50" height="30" viewBox="70 105 50 30">
<path d="M79,116 L87,124 M87,116 L79,124" stroke="#6a6a6a" stroke-width="0.9"/>
<circle cx="102.1" cy="118.5" r="5.4" fill="#f4f4f4" stroke="#23398c" stroke-width="2.2"/>
<path d="M98.5,118.5 L105.5,118.5 M102,115 L102,122" stroke="#c0c0c0" stroke-width="0.8"/>
<line x1="102.5" y1="119" x2="106.8" y2="123.5" stroke="#f0a000" stroke-width="2"/>
<circle cx="107.3" cy="124" r="1.2" fill="#e06060"/>
</svg>
<div id="ruler" class="a"></div>
<div id="canvas" class="a"></div>
<svg class="a" style="left:95px;top:155px" width="1043" height="577" viewBox="95 155 1043 577"><line x1="95" y1="631" x2="1138" y2="631" stroke="#1e1e1e" stroke-width="1"/><line x1="241" y1="155" x2="241" y2="732" stroke="#1e1e1e" stroke-width="1"/><line x1="1022.5" y1="155" x2="1022.5" y2="732" stroke="#1e1e1e" stroke-width="1"/><rect x="163" y="709" width="1" height="1" fill="#4a4a4a"/><rect x="163" y="631" width="1" height="1" fill="#4a4a4a"/><rect x="163" y="553" width="1" height="1" fill="#4a4a4a"/><rect x="163" y="475" width="1" height="1" fill="#4a4a4a"/><rect x="163" y="397" width="1" height="1" fill="#4a4a4a"/><rect x="163" y="318" width="1" height="1" fill="#4a4a4a"/><rect x="163" y="240" width="1" height="1" fill="#4a4a4a"/><rect x="163" y="162" width="1" height="1" fill="#4a4a4a"/><rect x="241" y="709" width="1" height="1" fill="#4a4a4a"/><rect x="241" y="631" width="1" height="1" fill="#4a4a4a"/><rect x="241" y="553" width="1" height="1" fill="#4a4a4a"/><rect x="241" y="475" width="1" height="1" fill="#4a4a4a"/><rect x="241" y="397" width="1" height="1" fill="#4a4a4a"/><rect x="241" y="318" width="1" height="1" fill="#4a4a4a"/><rect x="241" y="240" width="1" height="1" fill="#4a4a4a"/><rect x="241" y="162" width="1" height="1" fill="#4a4a4a"/><rect x="319" y="709" width="1" height="1" fill="#4a4a4a"/><rect x="319" y="631" width="1" height="1" fill="#4a4a4a"/><rect x="319" y="553" width="1" height="1" fill="#4a4a4a"/><rect x="319" y="475" width="1" height="1" fill="#4a4a4a"/><rect x="319" y="397" width="1" height="1" fill="#4a4a4a"/><rect x="319" y="318" width="1" height="1" fill="#4a4a4a"/><rect x="319" y="240" width="1" height="1" fill="#4a4a4a"/><rect x="319" y="162" width="1" height="1" fill="#4a4a4a"/><rect x="397" y="709" width="1" height="1" fill="#4a4a4a"/><rect x="397" y="631" width="1" height="1" fill="#4a4a4a"/><rect x="397" y="553" width="1" height="1" fill="#4a4a4a"/><rect x="397" y="475" width="1" height="1" fill="#4a4a4a"/><rect x="397" y="397" width="1" height="1" fill="#4a4a4a"/><rect x="397" y="318" width="1" height="1" fill="#4a4a4a"/><rect x="397" y="240" width="1" height="1" fill="#4a4a4a"/><rect x="397" y="162" width="1" height="1" fill="#4a4a4a"/><rect x="475" y="709" width="1" height="1" fill="#4a4a4a"/><rect x="475" y="631" width="1" height="1" fill="#4a4a4a"/><rect x="475" y="553" width="1" height="1" fill="#4a4a4a"/><rect x="475" y="475" width="1" height="1" fill="#4a4a4a"/><rect x="475" y="397" width="1" height="1" fill="#4a4a4a"/><rect x="475" y="318" width="1" height="1" fill="#4a4a4a"/><rect x="475" y="240" width="1" height="1" fill="#4a4a4a"/><rect x="475" y="162" width="1" height="1" fill="#4a4a4a"/><rect x="553" y="709" width="1" height="1" fill="#4a4a4a"/><rect x="553" y="631" width="1" height="1" fill="#4a4a4a"/><rect x="553" y="553" width="1" height="1" fill="#4a4a4a"/><rect x="553" y="475" width="1" height="1" fill="#4a4a4a"/><rect x="553" y="397" width="1" height="1" fill="#4a4a4a"/><rect x="553" y="318" width="1" height="1" fill="#4a4a4a"/><rect x="553" y="240" width="1" height="1" fill="#4a4a4a"/><rect x="553" y="162" width="1" height="1" fill="#4a4a4a"/><rect x="632" y="709" width="1" height="1" fill="#4a4a4a"/><rect x="632" y="631" width="1" height="1" fill="#4a4a4a"/><rect x="632" y="553" width="1" height="1" fill="#4a4a4a"/><rect x="632" y="475" width="1" height="1" fill="#4a4a4a"/><rect x="632" y="397" width="1" height="1" fill="#4a4a4a"/><rect x="632" y="318" width="1" height="1" fill="#4a4a4a"/><rect x="632" y="240" width="1" height="1" fill="#4a4a4a"/><rect x="632" y="162" width="1" height="1" fill="#4a4a4a"/><rect x="710" y="709" width="1" height="1" fill="#4a4a4a"/><rect x="710" y="631" width="1" height="1" fill="#4a4a4a"/><rect x="710" y="553" width="1" height="1" fill="#4a4a4a"/><rect x="710" y="475" width="1" height="1" fill="#4a4a4a"/><rect x="710" y="397" width="1" height="1" fill="#4a4a4a"/><rect x="710" y="318" width="1" height="1" fill="#4a4a4a"/><rect x="710" y="240" width="1" height="1" fill="#4a4a4a"/><rect x="710" y="162" width="1" height="1" fill="#4a4a4a"/><rect x="788" y="709" width="1" height="1" fill="#4a4a4a"/><rect x="788" y="631" width="1" height="1" fill="#4a4a4a"/><rect x="788" y="553" width="1" height="1" fill="#4a4a4a"/><rect x="788" y="475" width="1" height="1" fill="#4a4a4a"/><rect x="788" y="397" width="1" height="1" fill="#4a4a4a"/><rect x="788" y="318" width="1" height="1" fill="#4a4a4a"/><rect x="788" y="240" width="1" height="1" fill="#4a4a4a"/><rect x="788" y="162" width="1" height="1" fill="#4a4a4a"/><rect x="866" y="709" width="1" height="1" fill="#4a4a4a"/><rect x="866" y="631" width="1" height="1" fill="#4a4a4a"/><rect x="866" y="553" width="1" height="1" fill="#4a4a4a"/><rect x="866" y="475" width="1" height="1" fill="#4a4a4a"/><rect x="866" y="397" width="1" height="1" fill="#4a4a4a"/><rect x="866" y="318" width="1" height="1" fill="#4a4a4a"/><rect x="866" y="240" width="1" height="1" fill="#4a4a4a"/><rect x="866" y="162" width="1" height="1" fill="#4a4a4a"/><rect x="944" y="709" width="1" height="1" fill="#4a4a4a"/><rect x="944" y="631" width="1" height="1" fill="#4a4a4a"/><rect x="944" y="553" width="1" height="1" fill="#4a4a4a"/><rect x="944" y="475" width="1" height="1" fill="#4a4a4a"/><rect x="944" y="397" width="1" height="1" fill="#4a4a4a"/><rect x="944" y="318" width="1" height="1" fill="#4a4a4a"/><rect x="944" y="240" width="1" height="1" fill="#4a4a4a"/><rect x="944" y="162" width="1" height="1" fill="#4a4a4a"/><rect x="1022" y="709" width="1" height="1" fill="#4a4a4a"/><rect x="1022" y="631" width="1" height="1" fill="#4a4a4a"/><rect x="1022" y="553" width="1" height="1" fill="#4a4a4a"/><rect x="1022" y="475" width="1" height="1" fill="#4a4a4a"/><rect x="1022" y="397" width="1" height="1" fill="#4a4a4a"/><rect x="1022" y="318" width="1" height="1" fill="#4a4a4a"/><rect x="1022" y="240" width="1" height="1" fill="#4a4a4a"/><rect x="1022" y="162" width="1" height="1" fill="#4a4a4a"/><rect x="1100" y="709" width="1" height="1" fill="#4a4a4a"/><rect x="1100" y="631" width="1" height="1" fill="#4a4a4a"/><rect x="1100" y="553" width="1" height="1" fill="#4a4a4a"/><rect x="1100" y="475" width="1" height="1" fill="#4a4a4a"/><rect x="1100" y="397" width="1" height="1" fill="#4a4a4a"/><rect x="1100" y="318" width="1" height="1" fill="#4a4a4a"/><rect x="1100" y="240" width="1" height="1" fill="#4a4a4a"/><rect x="1100" y="162" width="1" height="1" fill="#4a4a4a"/><g stroke="#9a0000" stroke-width="1" fill="none"><line x1="221" y1="631" x2="261" y2="631"/><line x1="241" y1="611" x2="241" y2="651"/><circle cx="241" cy="631" r="4.5"/></g><rect x="475.18" y="255.83" width="297.01" height="375.17" fill="none" stroke="#fff" stroke-width="2"/><g stroke="#00ffff" stroke-width="1" fill="none"><line x1="371" y1="533.5" x2="424" y2="533.5"/><line x1="371" y1="631" x2="424" y2="631"/><line x1="381.8" y1="533.5" x2="381.8" y2="631"/></g><path d="M381.8,533.5 L377.8,553.5 L385.8,553.5Z M381.8,631 L377.8,611 L385.8,611Z" fill="#00ffff"/><g stroke="#00ffff" stroke-width="1" fill="none"><line x1="824" y1="464.5" x2="876" y2="464.5"/><line x1="824" y1="631" x2="876" y2="631"/><line x1="866.0" y1="464.5" x2="866.0" y2="631"/></g><path d="M866.0,464.5 L862.0,484.5 L870.0,484.5Z M866.0,631 L862.0,611 L870.0,611Z" fill="#00ffff"/><g transform="translate(359.0,602.3) rotate(-90)" fill="none" stroke="#00ffff" stroke-width="1.4" stroke-linecap="round" stroke-linejoin="round"><path transform="translate(0,0)" d="M0.9,3.7 L6.3,0 L6.3,17"/><path transform="translate(9.7,0)" d="M0,0 L6,0 C8.8,0 10.5,2 10.5,4.5 C10.5,6 10,7 9.2,7.8 L0,17 L10.5,17"/><path transform="translate(25.2,0)" d="M0,16 L0,17"/><path transform="translate(29.2,0)" d="M10.5,0 L0,0 L0,7.6 L6.5,7.6 C9,7.6 10.5,9.5 10.5,12.3 C10.5,15.2 9,17 6.5,17 L0,17"/></g><g transform="translate(843.2,567.2) rotate(-90)" fill="none" stroke="#00ffff" stroke-width="1.4" stroke-linecap="round" stroke-linejoin="round"><path transform="translate(0,0)" d="M0,0 L6,0 C8.8,0 10.5,2 10.5,4.5 C10.5,6 10,7 9.2,7.8 L0,17 L10.5,17"/><path transform="translate(14.1,0)" d="M0.9,3.7 L6.3,0 L6.3,17"/><path transform="translate(24.7,0)" d="M0,16 L0,17"/><path transform="translate(28.6,0)" d="M0,0 L6.5,0 C9,0 10.5,1.6 10.5,4.1 C10.5,6.7 9,8.3 6.5,8.3 L1.8,8.3 M6.5,8.3 C9,8.3 10.5,10.2 10.5,12.7 C10.5,15.4 9,17 6.5,17 L0,17"/></g><defs><radialGradient id="gRing" gradientUnits="userSpaceOnUse" cx="616.2" cy="510" r="40"><stop offset="0.74" stop-color="#000" stop-opacity="0"/><stop offset="0.79" stop-color="#1c2228" stop-opacity="1"/><stop offset="0.84" stop-color="#3a4550"/><stop offset="0.875" stop-color="#4e5a66"/><stop offset="0.9" stop-color="#3e4852"/><stop offset="0.925" stop-color="#5a6875"/><stop offset="0.95" stop-color="#6a7986"/><stop offset="0.975" stop-color="#5e6c78"/><stop offset="0.99" stop-color="#3a4450" stop-opacity="0.6"/><stop offset="1" stop-color="#000" stop-opacity="0"/></radialGradient></defs><circle cx="616.2" cy="510" r="40" fill="url(#gRing)"/><path d="M616.30,510.60 L616.30,532.38 L621.25,527.70 L625.57,537.42 L630.07,535.53 L625.84,526.08 L631.87,526.08 Z" fill="none" stroke="#fff" stroke-width="3.4" stroke-linejoin="round"/><path d="M616.30,510.60 L616.30,532.38 L621.25,527.70 L625.57,537.42 L630.07,535.53 L625.84,526.08 L631.87,526.08 Z" fill="#fff" stroke="#000" stroke-width="1.3" stroke-linejoin="miter"/></svg>
<div id="vscroll" class="a"></div>
<div id="vthumb" class="a"></div>
<div id="hscroll" class="a"></div>
<div id="hthumb" class="a"></div>
<div id="zoomlbl" class="a">10 &lt; 100</div>
<svg class="a" style="left:0;top:0" width="1500" height="844" viewBox="0 0 1500 844" font-family="Liberation Sans"><line x1="162.5" y1="148" x2="162.5" y2="155" stroke="#5a5a5a" stroke-width="1"/><text x="162.5" y="141" text-anchor="middle" font-size="9.6" fill="#222">-10</text><line x1="240.5" y1="148" x2="240.5" y2="155" stroke="#5a5a5a" stroke-width="1"/><text x="240.7" y="141" text-anchor="middle" font-size="9.6" fill="#222">0</text><line x1="318.5" y1="148" x2="318.5" y2="155" stroke="#5a5a5a" stroke-width="1"/><text x="318.9" y="141" text-anchor="middle" font-size="9.6" fill="#222">10</text><line x1="397.5" y1="148" x2="397.5" y2="155" stroke="#5a5a5a" stroke-width="1"/><text x="397.0" y="141" text-anchor="middle" font-size="9.6" fill="#222">20</text><line x1="475.5" y1="148" x2="475.5" y2="155" stroke="#5a5a5a" stroke-width="1"/><text x="475.2" y="141" text-anchor="middle" font-size="9.6" fill="#222">30</text><line x1="553.5" y1="148" x2="553.5" y2="155" stroke="#5a5a5a" stroke-width="1"/><text x="553.3" y="141" text-anchor="middle" font-size="9.6" fill="#222">40</text><line x1="631.5" y1="148" x2="631.5" y2="155" stroke="#5a5a5a" stroke-width="1"/><text x="631.5" y="141" text-anchor="middle" font-size="9.6" fill="#222">50</text><line x1="709.5" y1="148" x2="709.5" y2="155" stroke="#5a5a5a" stroke-width="1"/><text x="709.7" y="141" text-anchor="middle" font-size="9.6" fill="#222">60</text><line x1="787.5" y1="148" x2="787.5" y2="155" stroke="#5a5a5a" stroke-width="1"/><text x="787.8" y="141" text-anchor="middle" font-size="9.6" fill="#222">70</text><line x1="865.5" y1="148" x2="865.5" y2="155" stroke="#5a5a5a" stroke-width="1"/><text x="866.0" y="141" text-anchor="middle" font-size="9.6" fill="#222">80</text><line x1="944.5" y1="148" x2="944.5" y2="155" stroke="#5a5a5a" stroke-width="1"/><text x="944.1" y="141" text-anchor="middle" font-size="9.6" fill="#222">90</text><line x1="1022.5" y1="148" x2="1022.5" y2="155" stroke="#5a5a5a" stroke-width="1"/><text x="1022.3" y="141" text-anchor="middle" font-size="9.6" fill="#222">100</text><line x1="1100.5" y1="148" x2="1100.5" y2="155" stroke="#5a5a5a" stroke-width="1"/><text x="1100.5" y="141" text-anchor="middle" font-size="9.6" fill="#222">110</text><line x1="88" y1="709.5" x2="95" y2="709.5" stroke="#5a5a5a" stroke-width="1"/><text transform="translate(81.6,709.2) rotate(-90)" x="0" y="0" text-anchor="middle" font-size="9.6" fill="#222">-10</text><line x1="88" y1="631.5" x2="95" y2="631.5" stroke="#5a5a5a" stroke-width="1"/><text transform="translate(81.6,631.0) rotate(-90)" x="0" y="0" text-anchor="middle" font-size="9.6" fill="#222">0</text><line x1="88" y1="552.5" x2="95" y2="552.5" stroke="#5a5a5a" stroke-width="1"/><text transform="translate(81.6,552.8) rotate(-90)" x="0" y="0" text-anchor="middle" font-size="9.6" fill="#222">10</text><line x1="88" y1="474.5" x2="95" y2="474.5" stroke="#5a5a5a" stroke-width="1"/><text transform="translate(81.6,474.7) rotate(-90)" x="0" y="0" text-anchor="middle" font-size="9.6" fill="#222">20</text><line x1="88" y1="396.5" x2="95" y2="396.5" stroke="#5a5a5a" stroke-width="1"/><text transform="translate(81.6,396.5) rotate(-90)" x="0" y="0" text-anchor="middle" font-size="9.6" fill="#222">30</text><line x1="88" y1="318.5" x2="95" y2="318.5" stroke="#5a5a5a" stroke-width="1"/><text transform="translate(81.6,318.4) rotate(-90)" x="0" y="0" text-anchor="middle" font-size="9.6" fill="#222">40</text><line x1="88" y1="240.5" x2="95" y2="240.5" stroke="#5a5a5a" stroke-width="1"/><text transform="translate(81.6,240.2) rotate(-90)" x="0" y="0" text-anchor="middle" font-size="9.6" fill="#222">50</text><line x1="88" y1="162.5" x2="95" y2="162.5" stroke="#5a5a5a" stroke-width="1"/><text transform="translate(81.6,162.0) rotate(-90)" x="0" y="0" text-anchor="middle" font-size="9.6" fill="#222">60</text><path d="M610.7,145 L622,145 L616.3,151 Z" fill="#000"/><path d="M85,504 L91,510 L85,516 Z" fill="#000"/></svg>
<div id="hist" class="a"></div>
<div class="a" style="left:77px;top:751px;font-size:13.2px;color:#0000d0;white-space:nowrap"><i>Comando:</i> snapmiddlemanual</div>
<div id="cmdrow" class="a"></div>
<div class="a" style="left:73px;top:777px;font-size:13px;color:#111">Comando:</div>
<div id="cmdin" class="a"></div>
<div id="cmdbtn" class="a"></div>
<svg class="a" style="left:1127px;top:772px" width="27" height="25" viewBox="1127 772 27 25"><rect x="1133.5" y="780.5" width="13" height="9" fill="#f0f0f0" stroke="#333" stroke-width="1"/><rect x="1133" y="780" width="14" height="2.6" fill="#111"/></svg>
<div id="docborder" class="a"></div>
<div id="rdock" class="a"></div>
<div class="a" style="left:1155px;top:108px;width:300px;height:22px;background:linear-gradient(#ececec,#e2e2e2);border-bottom:1px solid #bebebe"></div><div class="a" style="left:1284px;top:112px;font-size:11.8px;color:#2a2a2a;white-space:nowrap">Lista de capas</div><div class="a" style="left:1155px;top:130px;width:60px;height:26px;background:linear-gradient(#e8e8e8,#f3f3f3 45%,#f6f6f6);border-right:1px solid #b8b8b8;border-bottom:2px solid #b8b8b8"></div><div class="a" style="left:1215px;top:130px;width:60px;height:26px;background:linear-gradient(#e8e8e8,#f3f3f3 45%,#f6f6f6);border-right:1px solid #b8b8b8;border-bottom:2px solid #b8b8b8"></div><div class="a" style="left:1275px;top:130px;width:60px;height:26px;background:linear-gradient(#e8e8e8,#f3f3f3 45%,#f6f6f6);border-right:1px solid #b8b8b8;border-bottom:2px solid #b8b8b8"></div><div class="a" style="left:1335px;top:130px;width:60px;height:26px;background:linear-gradient(#e8e8e8,#f3f3f3 45%,#f6f6f6);border-right:1px solid #b8b8b8;border-bottom:2px solid #b8b8b8"></div><div class="a" style="left:1395px;top:130px;width:60px;height:26px;background:linear-gradient(#e8e8e8,#f3f3f3 45%,#f6f6f6);border-right:1px solid #b8b8b8;border-bottom:2px solid #b8b8b8"></div><svg class="a" style="left:0;top:0" width="1500" height="300" viewBox="0 0 1500 300"><circle cx="1164" cy="118" r="7" fill="#6c6c6c"/><path d="M1161,115 L1167,121 M1167,115 L1161,121" stroke="#fff" stroke-width="1.8"/><circle cx="1182" cy="118" r="7" fill="#6c6c6c"/><rect x="1180.5" y="114" width="5" height="4" fill="none" stroke="#fff" stroke-width="1.2"/><rect x="1178.3" y="116.5" width="5" height="4" fill="#6c6c6c" stroke="#fff" stroke-width="1.2"/><path d="M1177,143.10000000000002 C1180,135.8 1190,135.8 1193,143.10000000000002 C1190,149.60000000000002 1180,149.60000000000002 1177,143.10000000000002 Z" fill="#000"/><path d="M1179.4,143.4 C1181.5,139.20000000000002 1188.5,139.20000000000002 1190.6,143.4 C1188.5,146.8 1181.5,146.8 1179.4,143.4 Z" fill="#fff"/><circle cx="1185" cy="143.10000000000002" r="2.9" fill="#000"/><circle cx="1184.4" cy="142.20000000000002" r="0.7" fill="#888"/><path d="M1237,143.10000000000002 C1240,135.8 1250,135.8 1253,143.10000000000002 C1250,149.60000000000002 1240,149.60000000000002 1237,143.10000000000002 Z" fill="#9a9a9a"/><path d="M1239.4,143.4 C1241.5,139.20000000000002 1248.5,139.20000000000002 1250.6,143.4 C1248.5,146.8 1241.5,146.8 1239.4,143.4 Z" fill="#fff"/><circle cx="1245" cy="143.10000000000002" r="2.9" fill="#9a9a9a"/><circle cx="1244.4" cy="142.20000000000002" r="0.7" fill="#888"/><path d="M1299,143 L1311,143 M1305,137 L1305,149" stroke="#e00000" stroke-width="3"/><path d="M1359,143 L1371,143" stroke="#e00000" stroke-width="3"/><line x1="1417.7" y1="149.8" x2="1431.9" y2="136.4" stroke="#8a5a10" stroke-width="3.4000000000000004" stroke-linecap="butt"/><line x1="1418.7" y1="148.8" x2="1431.9" y2="136.4" stroke="#f0b030" stroke-width="2.6"/><line x1="1429.7" y1="138.4" x2="1431.9" y2="136.4" stroke="#e02020" stroke-width="2.6"/><rect x="1161.5" y="163.5" width="15" height="8" fill="#fff" stroke="#000" stroke-width="1"/><path d="M1415,167.0 C1418,159.7 1428,159.7 1431,167.0 C1428,173.5 1418,173.5 1415,167.0 Z" fill="#000"/><path d="M1417.4,167.29999999999998 C1419.5,163.1 1426.5,163.1 1428.6,167.29999999999998 C1426.5,170.7 1419.5,170.7 1417.4,167.29999999999998 Z" fill="#fff"/><circle cx="1423" cy="167.0" r="2.9" fill="#000"/><circle cx="1422.4" cy="166.1" r="0.7" fill="#888"/><path d="M1442,166.5 L1442,164 A3,3 0 0 1 1448,164 L1448,166.5" fill="none" stroke="#bcbcbc" stroke-width="1.6"/><rect x="1440.5" y="166.5" width="9" height="7" rx="0.5" fill="#bcbcbc"/><rect x="1161.5" y="183.5" width="15" height="8" fill="#fff" stroke="#000" stroke-width="1"/><path d="M1415,187.0 C1418,179.7 1428,179.7 1431,187.0 C1428,193.5 1418,193.5 1415,187.0 Z" fill="#000"/><path d="M1417.4,187.29999999999998 C1419.5,183.1 1426.5,183.1 1428.6,187.29999999999998 C1426.5,190.7 1419.5,190.7 1417.4,187.29999999999998 Z" fill="#fff"/><circle cx="1423" cy="187.0" r="2.9" fill="#000"/><circle cx="1422.4" cy="186.1" r="0.7" fill="#888"/><path d="M1442,186.5 L1442,184 A3,3 0 0 1 1448,184 L1448,186.5" fill="none" stroke="#bcbcbc" stroke-width="1.6"/><rect x="1440.5" y="186.5" width="9" height="7" rx="0.5" fill="#bcbcbc"/><rect x="1161.5" y="203.5" width="15" height="8" fill="#00ffff" stroke="#000" stroke-width="1"/><path d="M1415,207.0 C1418,199.7 1428,199.7 1431,207.0 C1428,213.5 1418,213.5 1415,207.0 Z" fill="#000"/><path d="M1417.4,207.29999999999998 C1419.5,203.1 1426.5,203.1 1428.6,207.29999999999998 C1426.5,210.7 1419.5,210.7 1417.4,207.29999999999998 Z" fill="#fff"/><circle cx="1423" cy="207.0" r="2.9" fill="#000"/><circle cx="1422.4" cy="206.1" r="0.7" fill="#888"/><path d="M1442,206.5 L1442,204 A3,3 0 0 1 1448,204 L1448,206.5" fill="none" stroke="#bcbcbc" stroke-width="1.6"/><rect x="1440.5" y="206.5" width="9" height="7" rx="0.5" fill="#bcbcbc"/><rect x="1161.5" y="223.5" width="15" height="8" fill="#000" stroke="#000" stroke-width="1"/><path d="M1415,227.0 C1418,219.7 1428,219.7 1431,227.0 C1428,233.5 1418,233.5 1415,227.0 Z" fill="#000"/><path d="M1417.4,227.29999999999998 C1419.5,223.1 1426.5,223.1 1428.6,227.29999999999998 C1426.5,230.7 1419.5,230.7 1417.4,227.29999999999998 Z" fill="#fff"/><circle cx="1423" cy="227.0" r="2.9" fill="#000"/><circle cx="1422.4" cy="226.1" r="0.7" fill="#888"/><path d="M1442,226.5 L1442,224 A3,3 0 0 1 1448,224 L1448,226.5" fill="none" stroke="#bcbcbc" stroke-width="1.6"/><rect x="1440.5" y="226.5" width="9" height="7" rx="0.5" fill="#bcbcbc"/><rect x="1161.5" y="243.5" width="15" height="8" fill="#000" stroke="#000" stroke-width="1"/><path d="M1415,247.0 C1418,239.7 1428,239.7 1431,247.0 C1428,253.5 1418,253.5 1415,247.0 Z" fill="#000"/><path d="M1417.4,247.29999999999998 C1419.5,243.1 1426.5,243.1 1428.6,247.29999999999998 C1426.5,250.7 1419.5,250.7 1417.4,247.29999999999998 Z" fill="#fff"/><circle cx="1423" cy="247.0" r="2.9" fill="#000"/><circle cx="1422.4" cy="246.1" r="0.7" fill="#888"/><path d="M1442,246.5 L1442,244 A3,3 0 0 1 1448,244 L1448,246.5" fill="none" stroke="#bcbcbc" stroke-width="1.6"/><rect x="1440.5" y="246.5" width="9" height="7" rx="0.5" fill="#bcbcbc"/><line x1="1394.6" y1="233.3" x2="1407" y2="220.8" stroke="#8a5a10" stroke-width="3.0999999999999996" stroke-linecap="butt"/><line x1="1395.6" y1="232.3" x2="1407" y2="220.8" stroke="#f0b030" stroke-width="2.3"/><line x1="1404.8" y1="222.8" x2="1407" y2="220.8" stroke="#e02020" stroke-width="2.3"/></svg><div class="a" style="left:1183px;top:159px;font-size:13.2px;color:#111;white-space:nowrap">0</div><div class="a" style="left:1183px;top:179px;font-size:13.2px;color:#111;white-space:nowrap">Defpoints</div><div class="a" style="left:1183px;top:199px;font-size:13.2px;color:#111;white-space:nowrap">Dimensiones</div><div class="a" style="left:1183px;top:219px;font-size:13.2px;color:#111;white-space:nowrap">Invisible</div><div class="a" style="left:1183px;top:239px;font-size:13.2px;color:#111;white-space:nowrap">Visible</div>
<div id="tdock" class="a"></div>
<div class="a" style="left:1454px;top:108px;width:1px;height:690px;background:#c4c4c4"></div>
<svg class="a" style="left:0;top:0" width="1500" height="844" viewBox="0 0 1500 844"><rect x="1462" y="116" width="2" height="2" fill="#a8a8a8"/><rect x="1468" y="116" width="2" height="2" fill="#a8a8a8"/><rect x="1474" y="116" width="2" height="2" fill="#a8a8a8"/><rect x="1480" y="116" width="2" height="2" fill="#a8a8a8"/><rect x="1486" y="116" width="2" height="2" fill="#a8a8a8"/><rect x="1456.5" y="120" width="42.5" height="42.5" rx="5" fill="#b3b3b3"/><rect x="1456.5" y="417" width="42.5" height="42.5" rx="5" fill="#b3b3b3"/><rect x="1463.5" y="127.5" width="27" height="27" fill="#fff" stroke="#000" stroke-width="1"/><rect x="1463.5" y="127.5" width="27" height="3.6" fill="#000"/><rect x="1465" y="128.6" width="2.4" height="2.4" fill="#fff"/><rect x="1463.5" y="174.5" width="27" height="27" fill="#fff" stroke="#000" stroke-width="1"/><rect x="1463.5" y="174.5" width="27" height="3.6" fill="#000"/><rect x="1465" y="175.6" width="2.4" height="2.4" fill="#fff"/><rect x="1463.5" y="220.5" width="27" height="27" fill="#fff" stroke="#000" stroke-width="1"/><rect x="1463.5" y="220.5" width="27" height="3.6" fill="#000"/><rect x="1465" y="221.6" width="2.4" height="2.4" fill="#fff"/><rect x="1463.5" y="276.5" width="27" height="27" fill="#fff" stroke="#000" stroke-width="1"/><rect x="1463.5" y="276.5" width="27" height="3.6" fill="#000"/><rect x="1465" y="277.6" width="2.4" height="2.4" fill="#fff"/><rect x="1463.5" y="322.1" width="27" height="27" fill="#fff" stroke="#000" stroke-width="1"/><rect x="1463.5" y="322.1" width="27" height="3.6" fill="#000"/><rect x="1465" y="323.20000000000005" width="2.4" height="2.4" fill="#fff"/><rect x="1463.5" y="368.5" width="27" height="27" fill="#fff" stroke="#000" stroke-width="1"/><rect x="1463.5" y="368.5" width="27" height="3.6" fill="#000"/><rect x="1465" y="369.6" width="2.4" height="2.4" fill="#fff"/><rect x="1463.5" y="424.5" width="27" height="27" fill="#fff" stroke="#000" stroke-width="1"/><rect x="1463.5" y="424.5" width="27" height="3.6" fill="#000"/><rect x="1465" y="425.6" width="2.4" height="2.4" fill="#fff"/><rect x="1463.5" y="471.5" width="27" height="27" fill="#fff" stroke="#000" stroke-width="1"/><rect x="1463.5" y="471.5" width="27" height="3.6" fill="#000"/><rect x="1465" y="472.6" width="2.4" height="2.4" fill="#fff"/><path d="M1469,139 L1477,136 L1477,149 L1469,152 Z" fill="#c0c0c0" stroke="#333" stroke-width="0.8"/><path d="M1472,138 L1480,135 L1480,148 L1472,151 Z" fill="#e0e0e0" stroke="#333" stroke-width="0.8"/><path d="M1475,137 L1485,134 L1485,147 L1475,150 Z" fill="#fff" stroke="#333" stroke-width="0.8"/><path d="M1477.5,147 L1482,139 L1483,145 Z" fill="none" stroke="#e03030" stroke-width="0.8"/><rect x="1468" y="183" width="11" height="8" fill="#f2e8b8" stroke="#777" stroke-width="0.8"/><circle cx="1479" cy="191" r="4.5" fill="#f2e8b8" fill-opacity="0.85" stroke="#777" stroke-width="0.8"/><rect x="1467" y="229" width="20" height="14" rx="2" fill="#f4f4f4" stroke="#b8c8e8" stroke-width="0.8"/><rect x="1466" y="284.5" width="4" height="3.5" fill="#000"/><rect x="1472" y="284.5" width="16" height="3.5" fill="#fff" stroke="#000" stroke-width="0.8"/><rect x="1466" y="290.5" width="4" height="3.5" fill="#000"/><rect x="1472" y="290.5" width="16" height="3.5" fill="#fff" stroke="#000" stroke-width="0.8"/><rect x="1466" y="296.5" width="4" height="3.5" fill="#000"/><rect x="1472" y="296.5" width="16" height="3.5" fill="#fff" stroke="#000" stroke-width="0.8"/><path d="M1469.5,329.6 L1484.5,329.6 L1479,336.6 L1479,344.6 L1475,341.6 L1475,336.6 Z" fill="#d8d8d8" stroke="#444" stroke-width="0.8"/><path d="M1469.5,377 L1476,381 L1483,381 L1483,390 L1476,390 L1469.5,393 Z" fill="#e8e8e8" stroke="#333" stroke-width="0.8"/><line x1="1467" y1="385" x2="1488" y2="385" stroke="#f08080" stroke-width="0.8" stroke-dasharray="1.5 1"/><rect x="1466" y="431.0" width="11" height="1" fill="#666"/><rect x="1466" y="434.3" width="13" height="1" fill="#666"/><rect x="1466" y="437.6" width="11" height="1" fill="#666"/><rect x="1466" y="440.9" width="13" height="1" fill="#666"/><rect x="1464" y="446" width="26" height="4" fill="#fff" stroke="#555" stroke-width="0.6"/><rect x="1477" y="447" width="12" height="1.6" fill="#777"/><rect x="1470" y="478" width="14" height="17" rx="1" fill="#c8861a" stroke="#9a6410" stroke-width="0.8"/><rect x="1472" y="480" width="10" height="13.5" fill="#fafafa"/><rect x="1473.5" y="476.5" width="7" height="3" fill="#999"/><line x1="1456" y1="262" x2="1457" y2="262" stroke="#a0a0a0" stroke-width="1"/><line x1="1459" y1="262" x2="1460" y2="262" stroke="#a0a0a0" stroke-width="1"/><line x1="1462" y1="262" x2="1463" y2="262" stroke="#a0a0a0" stroke-width="1"/><line x1="1465" y1="262" x2="1466" y2="262" stroke="#a0a0a0" stroke-width="1"/><line x1="1468" y1="262" x2="1469" y2="262" stroke="#a0a0a0" stroke-width="1"/><line x1="1471" y1="262" x2="1472" y2="262" stroke="#a0a0a0" stroke-width="1"/><line x1="1474" y1="262" x2="1475" y2="262" stroke="#a0a0a0" stroke-width="1"/><line x1="1477" y1="262" x2="1478" y2="262" stroke="#a0a0a0" stroke-width="1"/><line x1="1480" y1="262" x2="1481" y2="262" stroke="#a0a0a0" stroke-width="1"/><line x1="1483" y1="262" x2="1484" y2="262" stroke="#a0a0a0" stroke-width="1"/><line x1="1486" y1="262" x2="1487" y2="262" stroke="#a0a0a0" stroke-width="1"/><line x1="1489" y1="262" x2="1490" y2="262" stroke="#a0a0a0" stroke-width="1"/><line x1="1492" y1="262" x2="1493" y2="262" stroke="#a0a0a0" stroke-width="1"/><line x1="1495" y1="262" x2="1496" y2="262" stroke="#a0a0a0" stroke-width="1"/><line x1="1498" y1="262" x2="1499" y2="262" stroke="#a0a0a0" stroke-width="1"/><line x1="1456" y1="409.5" x2="1457" y2="409.5" stroke="#a0a0a0" stroke-width="1"/><line x1="1459" y1="409.5" x2="1460" y2="409.5" stroke="#a0a0a0" stroke-width="1"/><line x1="1462" y1="409.5" x2="1463" y2="409.5" stroke="#a0a0a0" stroke-width="1"/><line x1="1465" y1="409.5" x2="1466" y2="409.5" stroke="#a0a0a0" stroke-width="1"/><line x1="1468" y1="409.5" x2="1469" y2="409.5" stroke="#a0a0a0" stroke-width="1"/><line x1="1471" y1="409.5" x2="1472" y2="409.5" stroke="#a0a0a0" stroke-width="1"/><line x1="1474" y1="409.5" x2="1475" y2="409.5" stroke="#a0a0a0" stroke-width="1"/><line x1="1477" y1="409.5" x2="1478" y2="409.5" stroke="#a0a0a0" stroke-width="1"/><line x1="1480" y1="409.5" x2="1481" y2="409.5" stroke="#a0a0a0" stroke-width="1"/><line x1="1483" y1="409.5" x2="1484" y2="409.5" stroke="#a0a0a0" stroke-width="1"/><line x1="1486" y1="409.5" x2="1487" y2="409.5" stroke="#a0a0a0" stroke-width="1"/><line x1="1489" y1="409.5" x2="1490" y2="409.5" stroke="#a0a0a0" stroke-width="1"/><line x1="1492" y1="409.5" x2="1493" y2="409.5" stroke="#a0a0a0" stroke-width="1"/><line x1="1495" y1="409.5" x2="1496" y2="409.5" stroke="#a0a0a0" stroke-width="1"/><line x1="1498" y1="409.5" x2="1499" y2="409.5" stroke="#a0a0a0" stroke-width="1"/></svg>
<div id="status" class="a">
<div class="st" style="left:2px;top:7px">47.9985,15.4891</div>
<div class="st" style="left:2px;top:28px">@47.9985,15.4891</div>
<div class="a" style="left:253px;top:4px;width:1px;height:40px;background:#9a9a9a"></div>
<div class="st" style="left:256px;top:7px">50.4358&lt;18°</div>
<div class="st" style="left:256px;top:28px">@50.4358&lt;18°</div>
<div class="a" style="left:506px;top:21px;width:6px;height:6px;border-radius:3px;background:#c4c4c4"></div>
<div class="st" style="left:568px;top:18px">Seleccionar entidad o región</div>
<svg class="a" style="left:715px;top:6px" width="24" height="34" viewBox="715 804 24 34"><rect x="717.3" y="806.3" width="17.6" height="29.3" rx="8.8" fill="#fff" stroke="#333" stroke-width="1"/><path d="M717.5,819.3 Q726,817.5 734.7,819.3" fill="none" stroke="#333" stroke-width="1"/><line x1="726.1" y1="806.5" x2="726.1" y2="818.5" stroke="#333" stroke-width="0.8"/><rect x="724.4" y="808.5" width="3.4" height="7.5" rx="1.7" fill="#fff" stroke="#333" stroke-width="0.9"/></svg>
<div class="a" style="left:940px;top:21px;width:6px;height:6px;border-radius:3px;background:#c4c4c4"></div>
<div class="st" style="left:949px;top:18px">No hay entidades seleccionadas.</div>
<div class="a" style="left:1269px;top:21px;width:6px;height:6px;border-radius:3px;background:#c4c4c4"></div>
</div>
</body></html>
